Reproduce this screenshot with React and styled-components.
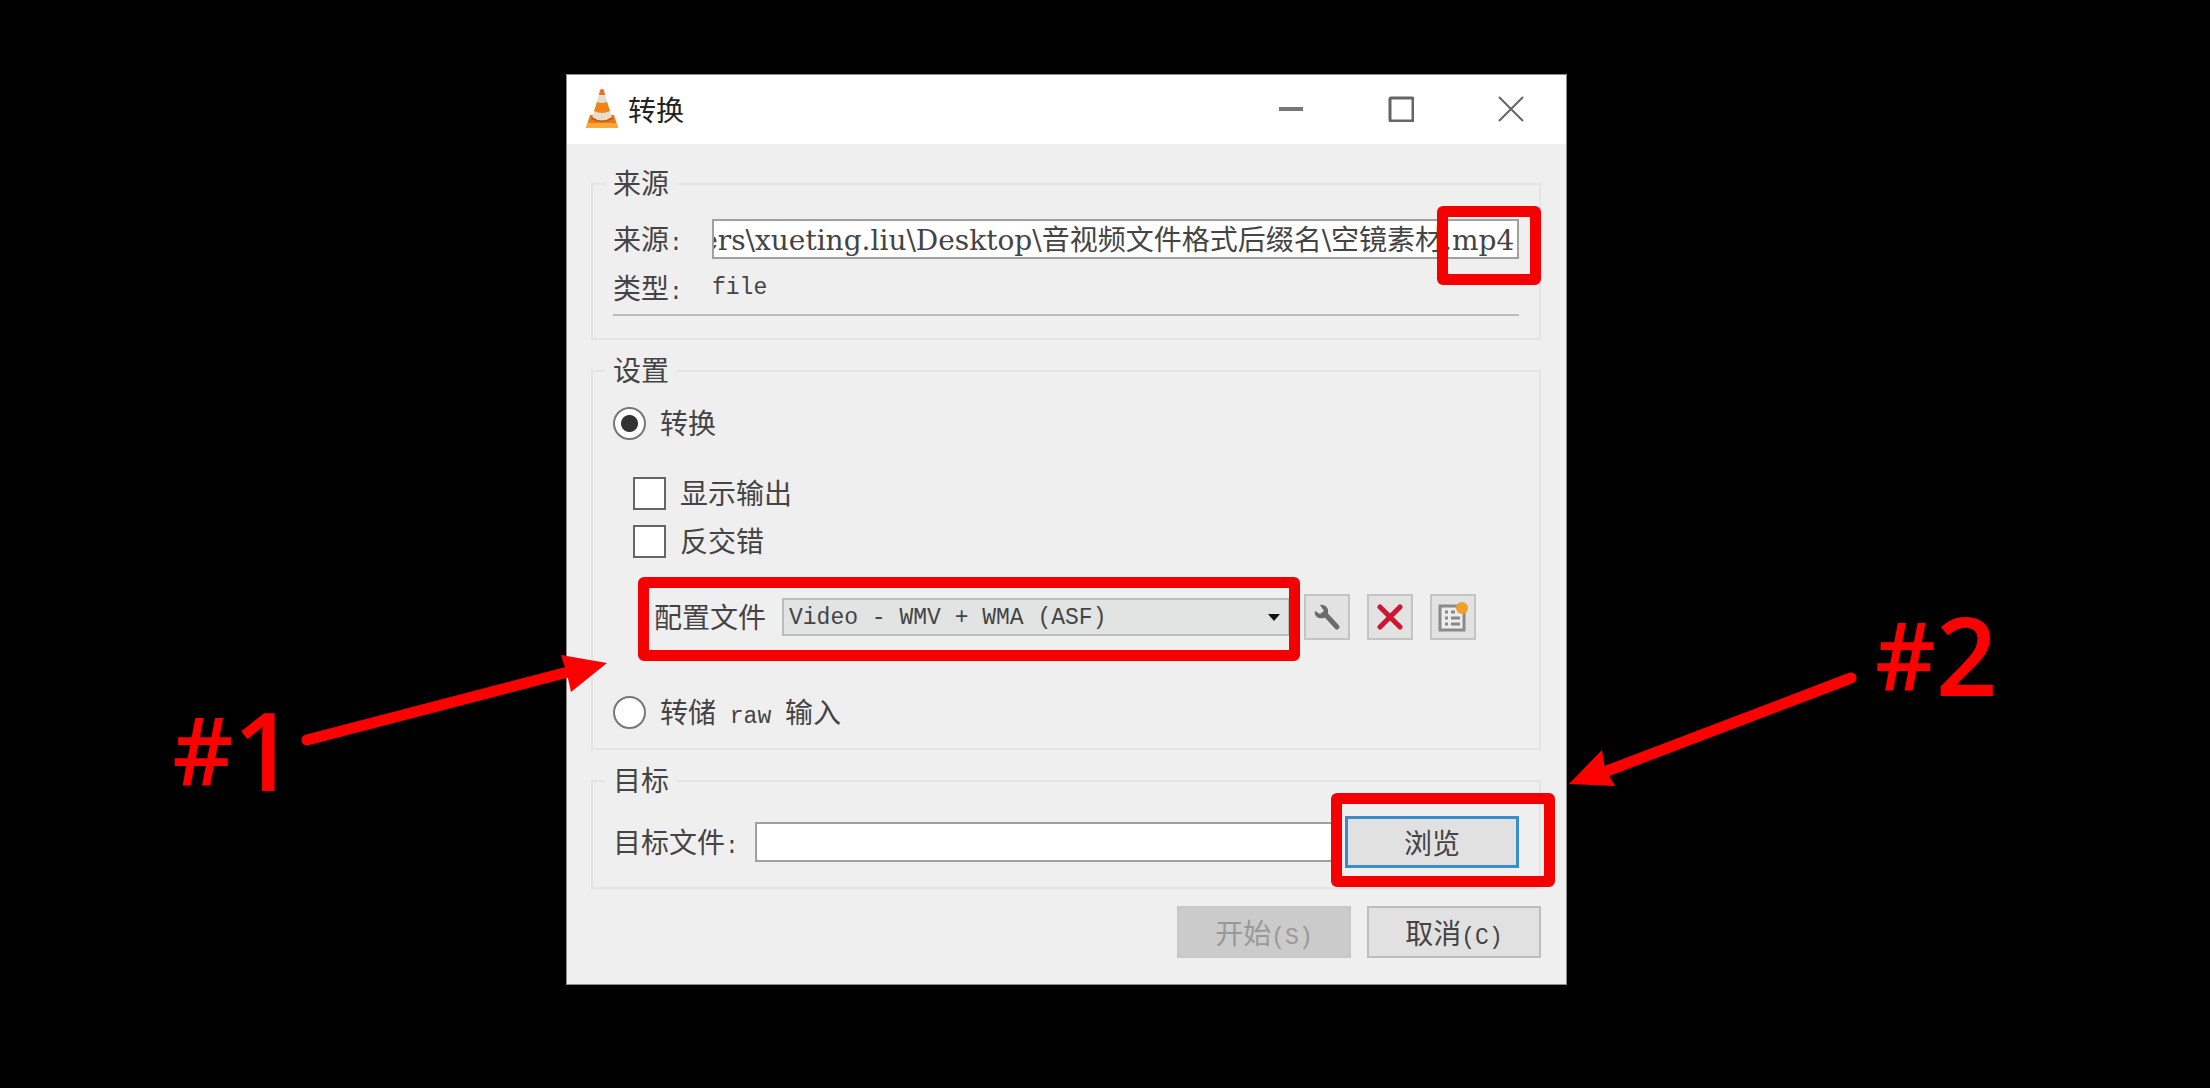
import React, { useEffect, useRef } from 'react'
import styled, { createGlobalStyle } from 'styled-components'

const GlobalStyle = createGlobalStyle`
* {
    box-sizing: border-box;
}

body {
    margin: 0;
    background: #000;
    color: #444;
    font-family: "Noto Sans CJK SC", sans-serif;
    font-size: 28px;
    line-height: 36px;
}

button, input, select {
    font: inherit;
    color: inherit;
}
`

const Page = styled.main`
min-height: 100vh;
padding: 74px 0;
display: grid;
grid-template-columns: 566fr 1001fr 643fr;
align-items: start;
`

const Dialog = styled.section`
grid-column: 2;
position: relative;
border: 1px solid #8c8c8c;
background: #efefef;
`

const TitleBar = styled.header`
height: 69px;
padding: 0 0 2px 19px;
display: flex;
align-items: center;
background: #fff;
`

const Title = styled.h1`
margin: 0 auto 0 10px;
font-size: 28px;
font-weight: 400;
color: #222;
`

const WindowButton = styled.button`
width: 110px;
height: 67px;
padding: 0;
border: none;
background: none;
display: flex;
align-items: center;
justify-content: center;
`

const Body = styled.form`
padding: 22px 25px 26px 24px;
`

const Group = styled.fieldset`
margin: 0 0 13px;
padding: 17px 20px 19px;
border: 2px solid #e4e4e4;
min-width: 0;

legend {
    margin-left: -8px;
    padding: 0 8px 4px;
    line-height: 32px;
}
`

const Row = styled.div`
height: ${({tall}) => tall || 34}px;
margin-top: ${({gap}) => gap || 0}px;
padding-left: ${({indent}) => indent || 0}px;
display: flex;
align-items: center;
`

const Label = styled.label`
width: ${({w}) => w ? w + "px" : "auto"};
padding-bottom: 2px;
flex: none;
white-space: pre;
`

/* half-width characters, half as wide as a Chinese one */
const Mono = styled.span`
font-family: "Liberation Mono", monospace;
font-size: 23px;
line-height: 0;
`

const TextField = styled.input`
flex: 1;
min-width: 0;
height: 40px;
padding: 0 3px 2px 0;
border: 2px solid #a0a0a0;
background: #fff;
outline: none;
font-family: "DejaVu Serif", "Noto Sans CJK SC", serif;
`

const Rule = styled.hr`
height: 2px;
margin: 9px 0 3px;
border: none;
background: #bcbcbc;
`

const Radio = styled.input`
appearance: none;
flex: none;
width: 33px;
height: 33px;
margin: 0 14px 0 0;
border: 2px solid #777;
border-radius: 50%;
background: #fff;

&:checked {
    background: radial-gradient(circle, #333 8px, #fff 9px);
}
`

const Check = styled.input`
appearance: none;
flex: none;
width: 33px;
height: 33px;
margin: 0 14px 0 0;
border: 2px solid #666;
background: #fff;
`

/* the thing that a red frame is drawn round */
const Marked = styled.div`
position: relative;
margin-left: ${({apart}) => apart || 0}px;
display: flex;
align-items: center;
flex: ${({grow}) => grow ? grow : "none"};
`

const Frame = styled.span`
position: absolute;
z-index: 1;
inset: ${({inset}) => inset};
width: ${({w}) => w ? w + "px" : "auto"};
border: 11px solid #f50000;
border-radius: 6px;
pointer-events: none;
`

const SelectBox = styled.div`
position: relative;
flex: 1;

svg {
    position: absolute;
    right: 10px;
    top: 16px;
    pointer-events: none;
}
`

const Select = styled.select`
appearance: none;
display: block;
width: 100%;
height: 38px;
padding: 2px 28px 0 5px;
border: 2px solid #b9bdbb;
border-radius: 0;
background: #e1e4e3;
font-family: "Liberation Mono", monospace;
font-size: 23px;
line-height: 32px;
`

const Tools = styled.div`
margin: 0 43px 0 14px;
display: flex;
gap: 17px;
`

const ToolButton = styled.button`
width: 46px;
height: 46px;
padding: 0;
border: 2px solid #c4c4c4;
background: #e2e2e2;
display: flex;
align-items: center;
justify-content: center;
`

const Button = styled.button`
width: 174px;
height: 52px;
padding: 0;
border: ${({$main}) => $main ? "3px solid #3a8ccb" : "2px solid #bdbdbd"};
background: #e1e1e1;
line-height: 36px;

&:disabled {
    border-color: #c8c8c8;
    background: #cbcbcb;
    color: #999;
}
`

const Footer = styled.footer`
margin-top: 17px;
display: flex;
justify-content: flex-end;
gap: 16px;
`

const Note = styled.div`
position: absolute;
z-index: 2;
top: ${({top}) => top}px;
left: ${({left}) => left};
right: ${({right}) => right};
display: flex;
color: #f00;
pointer-events: none;

svg {
    display: block;
}
`

const NoteText = styled.strong`
font-family: "Open Sans", sans-serif;
font-size: 108px;
font-weight: 600;
line-height: 120px;
white-space: nowrap;
`

const Hash = styled.span`
font-size: 94px;
vertical-align: 6px;
`

const Cone = () => (
    <svg width="32" height="40" viewBox="0 0 32 40" aria-hidden="true">
        <path d="M4 26h24l4 13H0z" fill="#ea7a14" />
        <path d="M1 34h30l1 5H0z" fill="#f9a93a" />
        <path d="M14 2q2-2 4 0l8 27q-10 6-20 0z" fill="#e4ddd0" />
        <path d="M14 1q2-2 4 0l1 5h-6z" fill="#e8702a" />
        <path d="M11 13q5 2 10 0l3 9q-8 4-16 0z" fill="#ef8416" />
        <path d="M6 28q10 7 20 0l1 2q-11 6-22 0z" fill="#c9570a" />
    </svg>
)

const Wrench = () => (
    <svg width="28" height="28" viewBox="0 0 28 28" aria-hidden="true">
        <path d="M12 11L24 24" stroke="#6b6b6b" strokeWidth="5" strokeLinecap="round" />
        <path d="M7 2C12 1 16 5 15 10c0 4-5 6-9 5-3-1-5-4-4-7l5 3 4-3z" fill="#6b6b6b" />
    </svg>
)

const Cross = () => (
    <svg width="26" height="26" viewBox="0 0 26 26" aria-hidden="true">
        <path d="M3 3l20 20M23 3L3 23" stroke="#cf1630" strokeWidth="5" strokeLinecap="round" />
    </svg>
)

const NewProfile = () => (
    <svg width="32" height="32" viewBox="0 0 32 32" aria-hidden="true">
        <path d="M3 5h24v24H3z" fill="#ececec" stroke="#8a8a8a" strokeWidth="3" />
        <path d="M8 11h3M8 17h3M8 23h3M14 11h4M14 17h9M14 23h9" stroke="#888" strokeWidth="3" />
        <circle cx="25" cy="7" r="6" fill="#eda02c" />
    </svg>
)

const source = 'C:\\Users\\xueting.liu\\Desktop\\音视频文件格式后缀名\\空镜素材.mp4'

export default function App() {
    const sourceRef = useRef(null)

    // show the end of the path, where the extension is
    useEffect(() => {
        sourceRef.current.scrollLeft = sourceRef.current.scrollWidth
    }, [])

    return (
        <>
            <GlobalStyle />
            <Page>
                <Dialog>
                    <TitleBar>
                        <Cone />
                        <Title>转换</Title>
                        <WindowButton aria-label="最小化">
                            <svg width="26" height="26"><path d="M1 13h24" stroke="#777" strokeWidth="4" /></svg>
                        </WindowButton>
                        <WindowButton aria-label="最大化">
                            <svg width="26" height="26"><rect x="2" y="2" width="23" height="23" rx="1" fill="none" stroke="#666" strokeWidth="3" /></svg>
                        </WindowButton>
                        <WindowButton aria-label="关闭">
                            <svg width="26" height="26"><path d="M1 1l24 24M25 1L1 25" stroke="#666" strokeWidth="2" /></svg>
                        </WindowButton>
                    </TitleBar>
                    <Body onSubmit={(e) => e.preventDefault()}>
                        <Group>
                            <legend>来源</legend>
                            <Row tall={40}>
                                <Label htmlFor="source" w={99}>来源<Mono>:</Mono></Label>
                                <Marked grow={1}>
                                    <TextField id="source" ref={sourceRef} defaultValue={source} />
                                    <Frame inset="-13px -22px -26px auto" w={104} />
                                </Marked>
                            </Row>
                            <Row gap={12}>
                                <Label as="span" w={99}>类型<Mono>:</Mono></Label>
                                <Mono>file</Mono>
                            </Row>
                            <Rule />
                        </Group>
                        <Group>
                            <legend>设置</legend>
                            <Row>
                                <Radio type="radio" name="mode" id="convert" defaultChecked />
                                <Label htmlFor="convert">转换</Label>
                            </Row>
                            <Row gap={36} indent={20}>
                                <Check type="checkbox" id="display" />
                                <Label htmlFor="display">显示输出</Label>
                            </Row>
                            <Row gap={14} indent={20}>
                                <Check type="checkbox" id="deinterlace" />
                                <Label htmlFor="deinterlace">反交错</Label>
                            </Row>
                            <Row gap={36} indent={41} tall={46}>
                                <Marked grow={1}>
                                    <Label htmlFor="profile" w={128}>配置文件</Label>
                                    <SelectBox>
                                        <Select id="profile">
                                            <option>Video - WMV + WMA (ASF)</option>
                                        </Select>
                                        <svg width="12" height="7"><path d="M0 0h12L6 7z" fill="#111" /></svg>
                                    </SelectBox>
                                    <Frame inset="-21px -10px -25px -16px" />
                                </Marked>
                                <Tools>
                                    <ToolButton type="button" aria-label="编辑配置"><Wrench /></ToolButton>
                                    <ToolButton type="button" aria-label="删除配置"><Cross /></ToolButton>
                                    <ToolButton type="button" aria-label="新建配置"><NewProfile /></ToolButton>
                                </Tools>
                            </Row>
                            <Row gap={55}>
                                <Radio type="radio" name="mode" id="dump" />
                                <Label htmlFor="dump">转储<Mono> raw </Mono>输入</Label>
                            </Row>
                        </Group>
                        <Group>
                            <legend>目标</legend>
                            <Row tall={52}>
                                <Label htmlFor="target" w={142}>目标文件<Mono>:</Mono></Label>
                                <TextField id="target" />
                                <Marked apart={12}>
                                    <Button type="button" $main>浏览</Button>
                                    <Frame inset="-23px -36px -19px -14px" />
                                </Marked>
                            </Row>
                        </Group>
                        <Footer>
                            <Button type="submit" disabled>开始<Mono>(S)</Mono></Button>
                            <Button type="button">取消<Mono>(C)</Mono></Button>
                        </Footer>
                    </Body>
                    <Note top={614} right="calc(100% + 272px)">
                        <NoteText><Hash>#</Hash>1</NoteText>
                    </Note>
                    <Note top={575} right="calc(100% - 40px)">
                        <svg width="310" height="100" viewBox="0 0 310 100" aria-hidden="true">
                            <path d="M10 90L275 21" stroke="#f00" strokeWidth="11" strokeLinecap="round" />
                            <path d="M264 5l46 8-36 29-4-18z" fill="#f00" />
                        </svg>
                    </Note>
                    <Note top={595} left="calc(100% + 3px)">
                        <svg width="300" height="120" viewBox="0 0 300 120" aria-hidden="true">
                            <path d="M282 8L30 104" stroke="#f00" strokeWidth="11" strokeLinecap="round" />
                            <path d="M0 114l33-34 3 19 10 17z" fill="#f00" />
                        </svg>
                    </Note>
                    <Note top={519} left="calc(100% + 309px)">
                        <NoteText><Hash>#</Hash>2</NoteText>
                    </Note>
                </Dialog>
            </Page>
        </>
    )
}
